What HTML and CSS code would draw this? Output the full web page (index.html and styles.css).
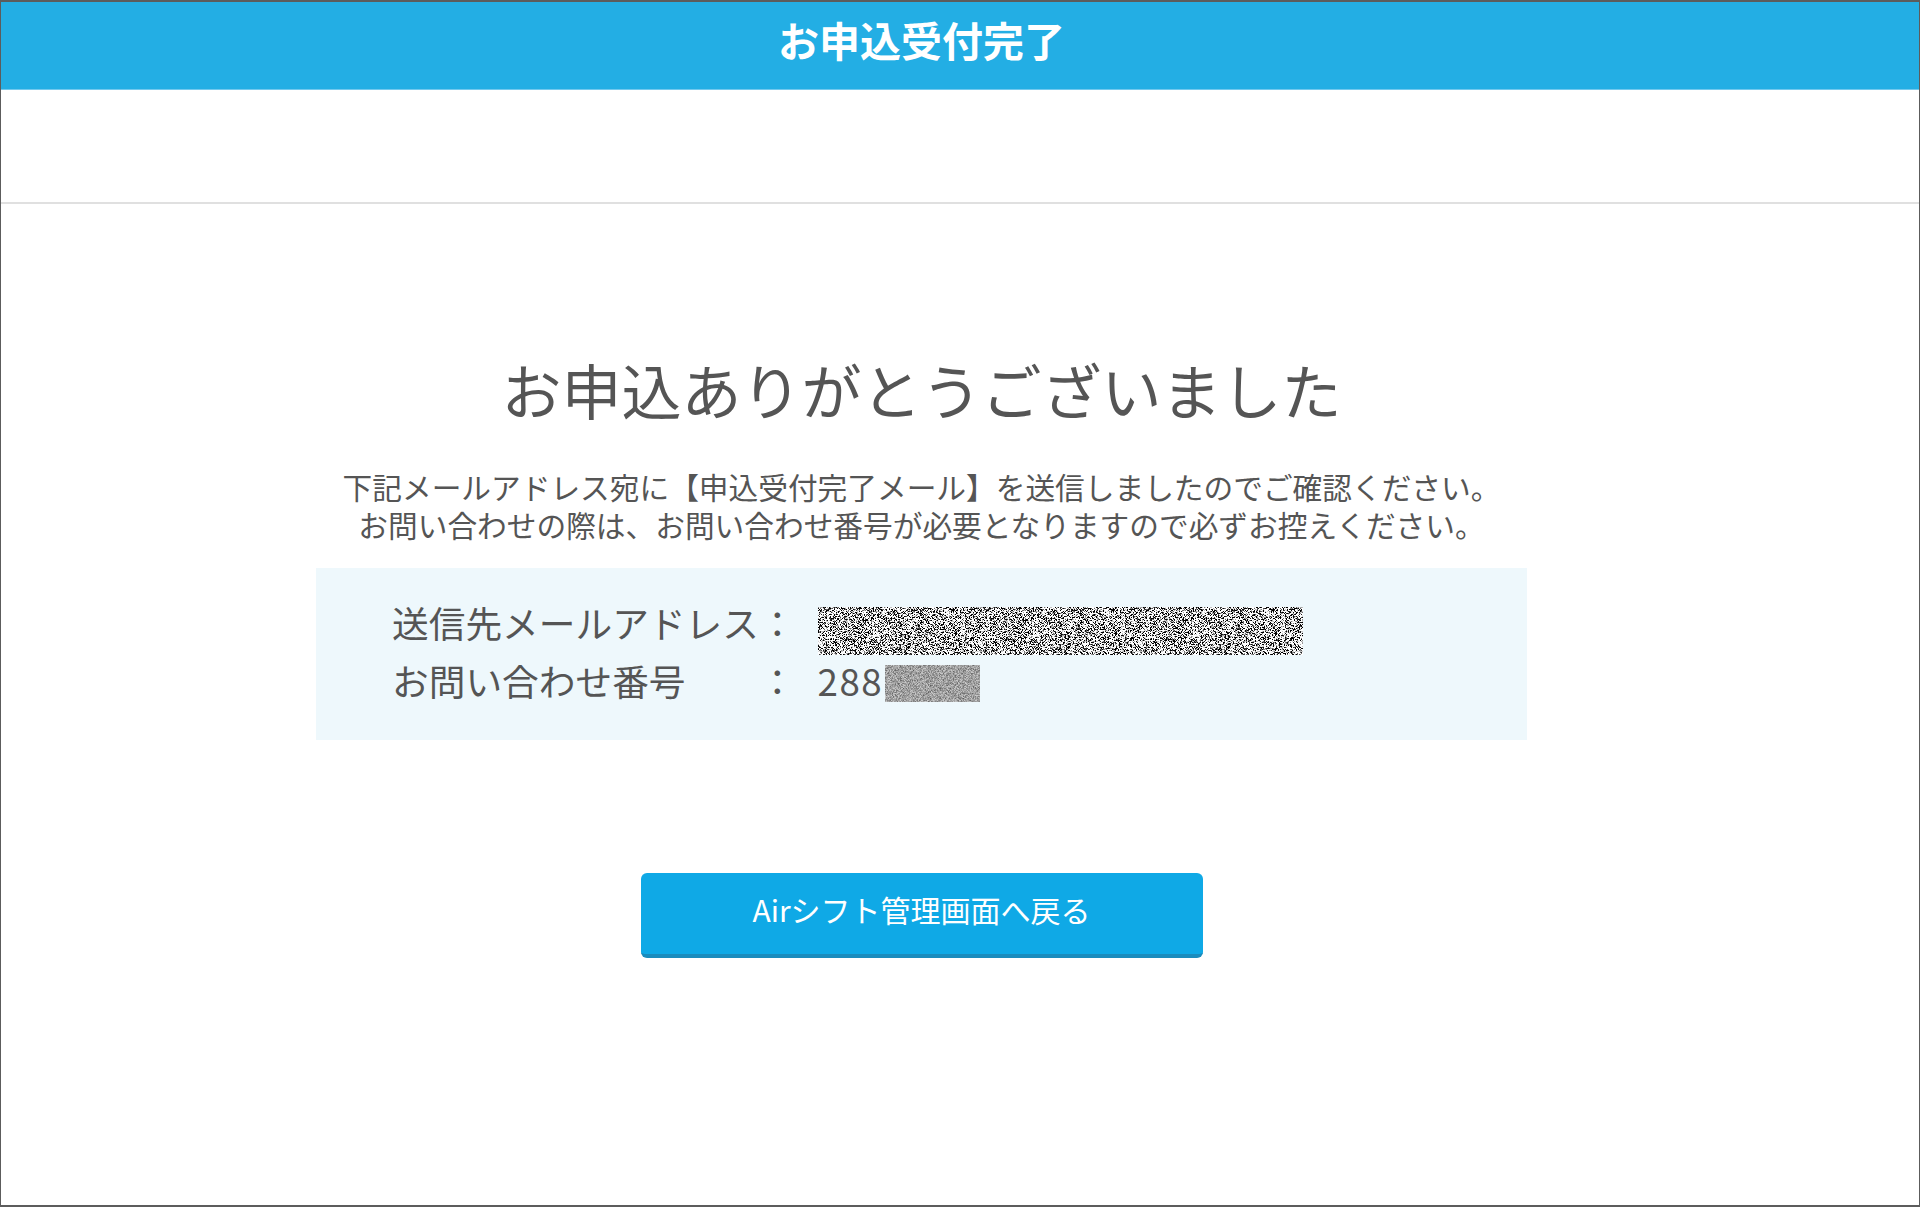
FILE: index.html
```html
<!DOCTYPE html>
<html lang="ja">
<head>
<meta charset="utf-8">
<title>お申込受付完了</title>
<link rel="stylesheet" href="styles.css">
</head>
<body>
<div class="frame">
  <header class="topbar">
    <h1 class="topbar-title">お申込受付完了</h1>
  </header>
  <div class="subbar"></div>
  <main class="main">
    <h2 class="thanks">お申込ありがとうございました</h2>
    <div class="lead">
      <p class="lead-line">下記メールアドレス宛に【申込受付完了メール】を送信しましたのでご確認ください。</p>
      <p class="lead-line">お問い合わせの際は、お問い合わせ番号が必要となりますので必ずお控えください。</p>
    </div>
    <section class="info">
      <div class="info-grid">
        <div class="info-label">送信先メールアドレス</div>
        <div class="info-colon">：</div>
        <div class="info-value">
          <svg class="redact-mail" width="485" height="48" viewBox="0 0 485 48">
            <filter id="noiseA" x="0" y="0" width="100%" height="100%">
              <feTurbulence type="fractalNoise" baseFrequency="1.6" numOctaves="1" seed="7"/>
              <feColorMatrix type="matrix" values="0 0 0 0 0  0 0 0 0 0  0 0 0 0 0  -9 0 0 0 4.7"/>
            </filter>
            <rect width="485" height="48" fill="#ffffff"/>
            <rect width="485" height="48" filter="url(#noiseA)"/>
          </svg>
        </div>
        <div class="info-label">お問い合わせ番号</div>
        <div class="info-colon">：</div>
        <div class="info-value"><span class="num">288</span><svg class="redact-num" width="95" height="37" viewBox="0 0 95 37">
            <filter id="noiseB" x="0" y="0" width="100%" height="100%">
              <feTurbulence type="fractalNoise" baseFrequency="1.4" numOctaves="1" seed="3"/>
              <feColorMatrix type="matrix" values="0 0 0 0 0  0 0 0 0 0  0 0 0 0 0  -1.2 0 0 0 0.8"/>
            </filter>
            <rect width="95" height="37" fill="#c8c8c8"/>
            <rect width="95" height="37" filter="url(#noiseB)"/>
          </svg></div>
      </div>
    </section>
    <div class="actions">
      <button class="back-btn" type="button">Airシフト管理画面へ戻る</button>
    </div>
  </main>
</div>
</body>
</html>
```
FILE: styles.css
```css
* { box-sizing: border-box; }
html, body { margin: 0; padding: 0; }
body {
  background: #ffffff;
  font-family: "Noto Sans CJK JP", "Noto Sans", sans-serif;
  color: #505050;
}
.frame {
  width: 1920px;
  height: 1207px;
  border: 1px solid #5c5c5c;
  border-top-width: 2px;
  border-bottom-width: 2px;
  overflow: hidden;
}
.topbar {
  height: 88px;
  background: #23aee4;
  border-bottom: 1px solid #72c9ee;
  padding: 9px 77px 0 0;
}
.topbar-title {
  margin: 0;
  text-align: center;
  color: #ffffff;
  font-size: 41px;
  font-weight: 700;
  line-height: 56px;
}
.subbar {
  height: 114px;
  border-bottom: 2px solid #e0e0e0;
}
.main {
  padding: 146px 77px 0 0;
  display: flex;
  flex-direction: column;
  align-items: center;
}
.thanks {
  margin: 0;
  font-size: 60px;
  font-weight: 400;
  line-height: 78px;
  color: #555555;
}
.lead {
  margin-top: 40px;
  font-size: 29.7px;
  text-align: center;
  color: #555555;
}
.lead-line {
  margin: 0;
  line-height: 37.5px;
}
.info {
  margin-top: 25px;
  width: 1211px;
  height: 172px;
  background: #eef8fc;
  padding: 25px 0 0 76px;
}
.info-grid {
  display: grid;
  grid-template-columns: auto auto 1fr;
  grid-auto-rows: 58px;
  font-size: 36.7px;
  line-height: 58px;
  color: #555555;
}
.info-colon { width: 36.7px; }
.info-value {
  margin-left: 22px;
  display: flex;
  align-items: flex-start;
}
.num { letter-spacing: 1.5px; }
.redact-mail { display: block; margin-top: 14px; }
.redact-num { display: block; margin-top: 14px; margin-left: 2px; }
.actions {
  margin-top: 133px;
}
.back-btn {
  width: 562px;
  height: 85px;
  border: 0;
  border-bottom: 4px solid #1a8cbd;
  border-radius: 6px;
  background: #0fa9e6;
  color: #ffffff;
  font-family: "Noto Sans CJK JP", "Noto Sans", sans-serif;
  font-size: 30px;
  line-height: 40px;
  padding: 0 0 10px;
  cursor: pointer;
}
```
